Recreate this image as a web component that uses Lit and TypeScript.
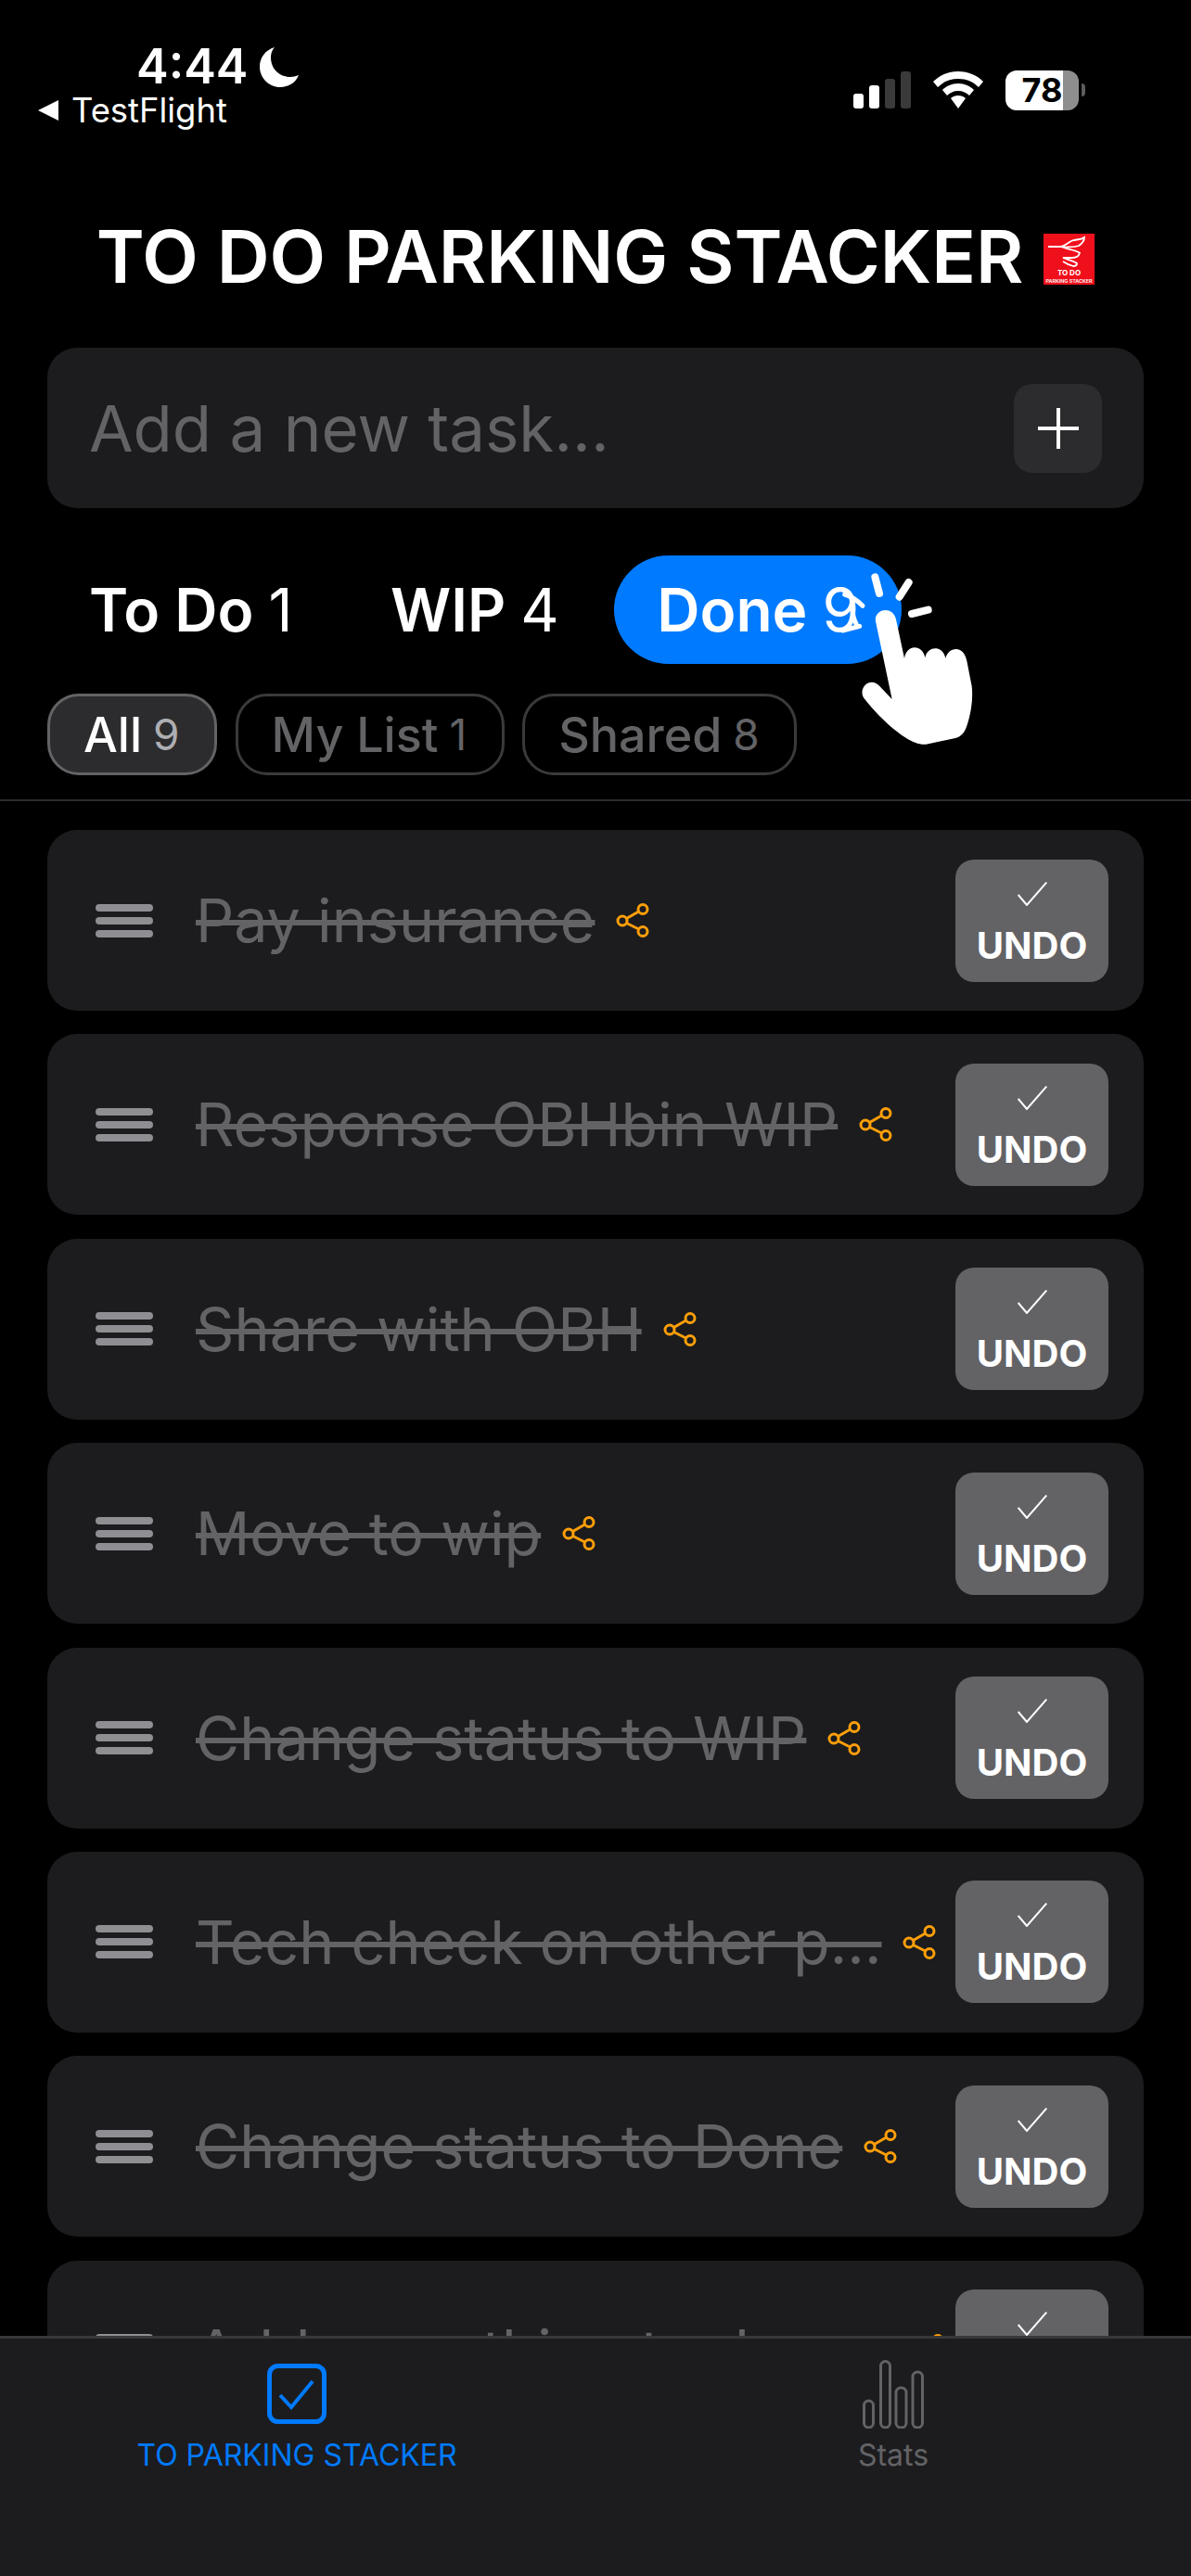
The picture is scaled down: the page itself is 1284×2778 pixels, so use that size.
import { LitElement, html, css, svg } from "lit";
import { customElement } from "lit/decorators.js";

const TASKS: string[] = [
  "Pay insurance",
  "Response OBHbin WIP",
  "Share with OBH",
  "Move to wip",
  "Change status to WIP",
  "Tech check on other p...",
  "Change status to Done",
  "Add something to do n...",
];

const shareIcon = html`<svg class="share" viewBox="0 0 36 37" fill="none" stroke="#ff9f0a" stroke-width="3">
  <circle cx="7" cy="19" r="5" />
  <circle cx="29" cy="6.5" r="5" />
  <circle cx="29" cy="30.5" r="5" />
  <path d="M11.5 16.5 24.5 9M11.5 21.5 24.5 28" />
</svg>`;

const checkIcon = html`<svg class="check" viewBox="0 0 32 26" fill="none" stroke="#fff" stroke-width="2">
  <path d="M.7 14 10 25 31.3 .6" />
</svg>`;

const handIcon = svg`
  <path fill="#fff" d="M192 240C188 220 205 203 225 204C242 205 254 216 258 234L285 360C288 338 303 325 318 325C335 325 348 338 352 358C356 338 370 328 385 328C402 328 414 340 418 360C422 342 436 330 452 330C470 330 482 345 487 368L503 450C508 490 500 540 488 575C480 600 470 612 450 618L355 638C335 640 310 630 290 617C245 590 190 535 155 490C142 472 150 450 165 441C180 433 195 438 205 450L245 492Z" />
  <g fill="none" stroke="#fff" stroke-linecap="round">
    <path stroke-width="24" d="M190 97 204 150M299 114 269 161M309 216 362 203" />
    <path stroke-width="15" d="M92 153C115 160 135 175 150 190M118 195C116 215 122 235 130 250M85 270 140 256" />
  </g>
`;

@customElement("app-root")
export class AppRoot extends LitElement {
  static styles = css`
    :host {
      display: block;
      position: relative;
      width: 1284px;
      height: 2778px;
      overflow: hidden;
      background: #000;
      color: #fff;
      font-family: Inter, "Liberation Sans", sans-serif;
    }
    .page {
      display: flex;
      flex-direction: column;
      height: 100%;
    }

    /* ios status bar */
    .status {
      flex: none;
      height: 143px;
      display: flex;
      justify-content: space-between;
      box-sizing: border-box;
      padding: 41px 114px 0 41px;
    }
    .status-left {
      display: flex;
      flex-direction: column;
    }
    .clock {
      display: flex;
      align-items: center;
      gap: 12px;
      padding-left: 106px;
      height: 62px;
      font-size: 52px;
      font-weight: 600;
      line-height: 62px;
    }
    .moon {
      width: 44px;
      height: 44px;
    }
    .back {
      display: flex;
      align-items: center;
      gap: 14px;
      font-size: 36.4px;
      line-height: 44px;
      margin-top: -6px;
    }
    .back-arrow {
      width: 22px;
      height: 22px;
    }
    .status-right {
      display: flex;
      align-items: center;
      gap: 24px;
      height: 44px;
      margin-top: 34px;
    }
    .signal {
      width: 62px;
      height: 40px;
    }
    .wifi {
      width: 54px;
      height: 40px;
    }
    .battery {
      display: flex;
      align-items: center;
      gap: 3px;
    }
    .battery-body {
      width: 79px;
      height: 43px;
      border-radius: 12px;
      background: linear-gradient(90deg, #fff 78%, #8e8e8e 78%);
      color: #000;
      font-size: 36px;
      font-weight: 700;
      line-height: 43px;
      text-align: center;
    }
    .battery-nub {
      width: 4px;
      height: 14px;
      border-radius: 0 4px 4px 0;
      background: #5c5c5c;
    }

    .title {
      flex: none;
      display: flex;
      justify-content: center;
      align-items: center;
      gap: 22px;
      height: 92px;
      margin-top: 88px;
    }
    .title h1 {
      margin: 0;
      font-size: 78.8px;
      font-weight: 600;
      line-height: 92px;
    }
    .logo {
      width: 55px;
      height: 55px;
      margin-top: 4px;
    }

    .add {
      flex: none;
      display: flex;
      align-items: center;
      justify-content: space-between;
      height: 173px;
      margin: 52px 51px 0;
      padding: 0 45px 0 45px;
      border-radius: 32px;
      background: #1c1c1e;
    }
    .placeholder {
      font-size: 69px;
      color: #636366;
    }
    .plus {
      width: 95px;
      height: 96px;
      border-radius: 20px;
      background: #2c2c2e;
      display: flex;
      align-items: center;
      justify-content: center;
    }
    .plus svg {
      width: 44px;
      height: 44px;
    }

    .tabs {
      flex: none;
      display: flex;
      align-items: center;
      margin: 51px 0 0 50px;
      height: 117px;
      gap: 13.5px;
    }
    .tab {
      display: flex;
      align-items: center;
      gap: 16px;
      height: 117px;
      box-sizing: border-box;
      padding: 0 46px;
      border-radius: 59px;
      font-size: 64px;
      font-weight: 600;
    }
    .tab span {
      font-weight: 400;
    }
    .tab.active {
      background: #007aff;
    }

    .chips {
      flex: none;
      display: flex;
      gap: 19.5px;
      margin: 32px 0 0 51px;
    }
    .chip {
      display: flex;
      align-items: center;
      gap: 12px;
      height: 88px;
      box-sizing: border-box;
      padding: 0 37.5px 0 36px;
      border: 3px solid #3a3a3c;
      border-radius: 34px;
      font-size: 52px;
      font-weight: 500;
      color: #636366;
    }
    .chip span {
      font-weight: 400;
      font-size: 46px;
    }
    .chip.active {
      border-color: #636366;
      background: #2c2c2e;
      color: #fff;
    }
    .chip.active span {
      color: #aeaeb2;
    }

    .list {
      flex: 1;
      min-height: 0;
      overflow: hidden;
      margin-top: 26px;
      border-top: 2px solid #2c2c2e;
      padding: 31px 51px 0;
      display: flex;
      flex-direction: column;
      gap: 25.4px;
    }
    .card {
      flex: none;
      display: flex;
      align-items: center;
      height: 195px;
      box-sizing: border-box;
      padding: 0 38px 0 52px;
      border-radius: 32px;
      background: #1c1c1e;
    }
    .grip {
      flex: none;
      display: flex;
      flex-direction: column;
      gap: 6px;
      width: 62px;
      margin-right: 46px;
    }
    .grip i {
      display: block;
      height: 8px;
      border-radius: 4px;
      background: #8e8e93;
    }
    .body {
      flex: 1;
      min-width: 0;
      display: flex;
      align-items: center;
      gap: 23px;
    }
    .name {
      font-size: 64.6px;
      color: #636366;
      text-decoration: line-through;
      white-space: nowrap;
    }
    .share {
      flex: none;
      width: 36px;
      height: 37px;
    }
    .undo {
      flex: none;
      width: 165px;
      height: 132px;
      border-radius: 20px;
      background: #636366;
      display: flex;
      flex-direction: column;
      align-items: center;
      justify-content: flex-end;
      padding-bottom: 21px;
      box-sizing: border-box;
      font-size: 40px;
      font-weight: 700;
      line-height: 36px;
      gap: 25px;
    }
    .check {
      width: 32px;
      height: 26px;
    }

    .bar {
      flex: none;
      height: 259px;
      box-sizing: border-box;
      border-top: 3px solid #38383a;
      background: #1c1c1e;
      display: grid;
      grid-template-columns: 1fr 1fr;
      margin-top: -1px;
      position: relative;
    }
    .bar-item {
      display: flex;
      flex-direction: column;
      align-items: center;
      font-size: 32px;
      color: #636366;
      padding-top: 23px;
    }
    .bar-item.active {
      color: #007aff;
      padding-right: 2px;
    }
    .bar-icon {
      width: 74px;
      height: 74px;
      margin-bottom: 9px;
    }

    .hand {
      position: absolute;
      left: 880px;
      top: 590px;
      width: 200px;
      height: 240px;
    }
  `;

  renderCard(title: string) {
    return html`<div class="card">
      <div class="grip"><i></i><i></i><i></i></div>
      <div class="body">
        <span class="name">${title}</span>
        ${shareIcon}
      </div>
      <div class="undo">${checkIcon}UNDO</div>
    </div>`;
  }

  render() {
    return html`<div class="page">
        <div class="status">
          <div class="status-left">
            <div class="clock">
              4:44
              <svg class="moon" viewBox="0 0 44 44">
                <path fill="#fff" d="M17 1C7 4 1 12 1 22c0 12 10 22 22 22 9 0 17-5 20-13-3 1-6 2-9 2-12 0-21-9-21-21 0-4 1-8 4-11Z" />
              </svg>
            </div>
            <div class="back">
              <svg class="back-arrow" viewBox="0 0 22 22"><path fill="#fff" d="M22 0V22L0 11Z" /></svg>
              TestFlight
            </div>
          </div>
          <div class="status-right">
            <svg class="signal" viewBox="0 0 62 40">
              <rect x="0" y="24" width="11" height="16" rx="3" fill="#fff" />
              <rect x="17" y="15" width="11" height="25" rx="3" fill="#fff" />
              <rect x="34" y="8" width="11" height="32" rx="3" fill="#3a3a3a" />
              <rect x="51" y="0" width="11" height="40" rx="3" fill="#3a3a3a" />
            </svg>
            <svg class="wifi" viewBox="0 0 54 40">
              <path fill="#fff" d="M27 0C16 0 7 4 0 11l5 6c6-6 13-9 22-9s16 3 22 9l5-6C47 4 38 0 27 0Z" />
              <path fill="#fff" d="M27 13c-7 0-13 3-17 7l5 6c3-3 7-5 12-5s9 2 12 5l5-6c-4-4-10-7-17-7Z" />
              <path fill="#fff" d="M27 26c-3 0-6 1-8 3l8 11 8-11c-2-2-5-3-8-3Z" />
            </svg>
            <div class="battery">
              <div class="battery-body">78</div>
              <div class="battery-nub"></div>
            </div>
          </div>
        </div>

        <div class="title">
          <h1>TO DO PARKING STACKER</h1>
          <svg class="logo" viewBox="0 0 55 55">
            <rect width="55" height="55" fill="#f0101c" />
            <path fill="none" stroke="#fff" stroke-width="1.8" d="M5 14H19C24 13 27 9 31 7.5 35 6 40 7 44 4 44 8 41 11 38 13 33 15 27 14 21 14.7 26 17 34 17 39 20.7 38 24 35 26 31 26H21C26 28 32 29 36 32 36 34 34 35 32 35 28 34 24 32 21 30" />
            <text x="27.5" y="45" fill="#fff" font-size="8" font-weight="700" text-anchor="middle">TO DO</text>
            <text x="27.5" y="52.5" fill="#fff" font-size="5.4" font-weight="600" text-anchor="middle">PARKING STACKER</text>
          </svg>
        </div>

        <div class="add">
          <span class="placeholder">Add a new task...</span>
          <div class="plus">
            <svg viewBox="0 0 44 44" stroke="#fff" stroke-width="4"><path d="M22 0V44M0 22H44" /></svg>
          </div>
        </div>

        <div class="tabs">
          <div class="tab">To Do <span>1</span></div>
          <div class="tab">WIP <span>4</span></div>
          <div class="tab active">Done <span>9</span></div>
        </div>

        <div class="chips">
          <div class="chip active">All <span>9</span></div>
          <div class="chip">My List <span>1</span></div>
          <div class="chip">Shared <span>8</span></div>
        </div>

        <div class="list">${TASKS.map((t) => this.renderCard(t))}</div>

        <div class="bar">
          <div class="bar-item active">
            <svg class="bar-icon" viewBox="0 0 74 74" fill="none" stroke="#007aff">
              <rect x="7.5" y="6.5" width="59" height="60" rx="9" stroke-width="5" />
              <path stroke-width="4" d="M19 38 31 51 54 23" />
            </svg>
            TO PARKING STACKER
          </div>
          <div class="bar-item">
            <svg class="bar-icon" viewBox="0 0 74 74" fill="none" stroke="#636366" stroke-width="3">
              <rect x="5.5" y="44" width="10" height="29" rx="5" />
              <rect x="23.5" y="1.5" width="10" height="71.5" rx="5" />
              <rect x="40" y="30" width="11" height="43" rx="5" />
              <rect x="58" y="13" width="10.5" height="60" rx="5" />
            </svg>
            Stats
          </div>
        </div>
      </div>

      <svg class="hand" viewBox="0 0 600 720">${handIcon}</svg>`;
  }
}
